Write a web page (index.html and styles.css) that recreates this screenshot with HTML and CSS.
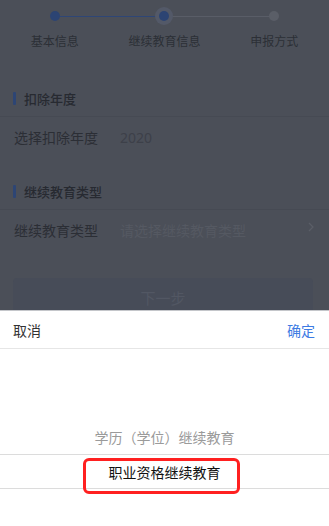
FILE: index.html
```html
<!DOCTYPE html>
<html lang="zh-CN">
<head>
  <meta charset="UTF-8">
  <meta name="viewport" content="width=device-width, initial-scale=1.0">
  <title>继续教育信息</title>
  <link rel="stylesheet" href="styles.css">
</head>
<body>
  <div class="steps">
    <div class="step done">
      <div class="track"><span class="dot"></span></div>
      <p class="step-label">基本信息</p>
    </div>
    <div class="step current">
      <div class="track"><span class="dot"></span></div>
      <p class="step-label">继续教育信息</p>
    </div>
    <div class="step">
      <div class="track"><span class="dot"></span></div>
      <p class="step-label">申报方式</p>
    </div>
  </div>

  <div class="section first">
    <h2 class="section-title">扣除年度</h2>
    <div class="row">
      <span class="row-label">选择扣除年度</span>
      <span class="row-value">2020</span>
    </div>
  </div>

  <div class="section">
    <h2 class="section-title">继续教育类型</h2>
    <div class="row">
      <span class="row-label">继续教育类型</span>
      <span class="row-value placeholder">请选择继续教育类型</span>
      <svg class="chevron" width="6" height="10" viewBox="0 0 6 10">
        <path d="M1 1l4 4-4 4" fill="none" stroke="#5a5e67" stroke-width="1.3"/>
      </svg>
    </div>
  </div>

  <button class="next-button">下一步</button>

  <div class="sheet">
    <div class="sheet-header">
      <span class="cancel">取消</span>
      <span class="confirm">确定</span>
    </div>
    <div class="picker">
      <div class="picker-item">学历（学位）继续教育</div>
      <div class="picker-item selected">职业资格继续教育</div>
    </div>
    <div class="highlight"></div>
  </div>
</body>
</html>
```

FILE: styles.css
```css
/* Global Styles */
body {
  font-family: "Noto Sans", "Noto Sans CJK SC", sans-serif;
  margin: 0;
  padding: 0;
  width: 329px;
  height: 526px;
  overflow: hidden;
  position: relative;
  background-color: #4b4f58;
}

/* Steps */
.steps {
  display: grid;
  grid-template-columns: repeat(3, 1fr);
  height: 74px;
}

.step {
  display: flex;
  flex-direction: column;
  align-items: center;
}

.track {
  position: relative;
  width: 100%;
  height: 32px;
  display: flex;
  align-items: center;
  justify-content: center;
}

.track::before,
.track::after {
  content: "";
  position: absolute;
  top: 16px;
  width: 50%;
  height: 1px;
  background-color: #595d67;
}

.track::before {
  left: 0;
}

.track::after {
  right: 0;
}

.step:first-child .track::before,
.step:last-child .track::after {
  display: none;
}

.step.done .track::after,
.step.current .track::before {
  background-color: #2e4676;
}

.dot {
  position: relative;
  z-index: 1;
  width: 10px;
  height: 10px;
  border-radius: 50%;
  background-color: #5a5e67;
}

.step.done .dot,
.step.current .dot {
  background-color: #2c4473;
}

.step.current .dot {
  box-shadow: 0 0 0 4px #535968;
}

.step-label {
  margin: 1px 0 0;
  font-size: 12px;
  line-height: 18px;
  color: #2c2f36;
}

/* Sections */
.section {
  margin-top: 10px;
}

.section.first {
  margin-top: 0;
}

.section-title {
  box-sizing: border-box;
  height: 43px;
  margin: 0;
  padding: 6px 13px 0;
  display: flex;
  align-items: center;
  font-size: 13px;
  font-weight: 500;
  color: #272a31;
  border-bottom: 1px solid #464a53;
}

.section-title::before {
  content: "";
  width: 3px;
  height: 13px;
  margin-right: 8px;
  border-radius: 1px;
  background-color: #2d4574;
}

.row {
  height: 40px;
  padding: 0 13px 0 14px;
  display: flex;
  align-items: center;
  font-size: 14px;
}

.row-label {
  width: 106px;
  color: #2b2e35;
}

.row-value {
  flex: 1;
  color: #3d4049;
}

.row-value.placeholder {
  color: #555962;
}

.chevron {
  margin: -6px 2px 0 0;
}

/* Button */
.next-button {
  display: block;
  width: 300px;
  height: 42px;
  margin: 28px 0 0 13px;
  border: none;
  border-radius: 4px;
  background-color: #474c58;
  color: #525763;
  font-family: inherit;
  font-size: 15px;
  padding: 0 0 3px;
}

/* Bottom sheet */
.sheet {
  position: absolute;
  left: 0;
  right: 0;
  bottom: 0;
  height: 216px;
  background-color: #fff;
  border-top: 1px solid #c4c6ca;
  box-sizing: border-box;
}

.sheet-header {
  height: 37px;
  padding: 0 14px 0 13px;
  display: flex;
  align-items: center;
  justify-content: space-between;
  font-size: 14px;
  border-bottom: 1px solid #e6e6e6;
}

.cancel {
  color: #333;
}

.confirm {
  color: #3d7be3;
}

.picker {
  padding-top: 71px;
}

.picker-item {
  height: 34px;
  display: flex;
  align-items: center;
  justify-content: center;
  font-size: 14px;
  color: #9a9a9a;
}

.picker-item.selected {
  height: 33px;
  color: #111;
  border-top: 1px solid #dcdcdc;
  border-bottom: 1px solid #dcdcdc;
}

.highlight {
  position: absolute;
  left: 83px;
  top: 147px;
  width: 151px;
  height: 30px;
  border: 3px solid #ff2020;
  border-radius: 6px;
}
```
